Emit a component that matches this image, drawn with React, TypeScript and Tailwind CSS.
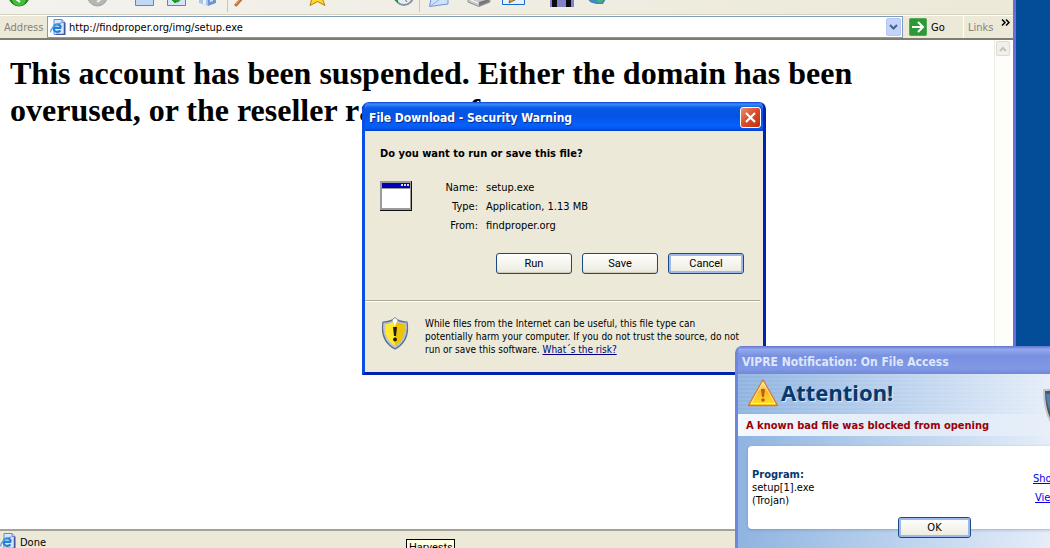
import React from "react";

const ui = "font-['DejaVu_Sans_Condensed','DejaVu_Sans',sans-serif]";
const sans = "font-[Roboto,'Liberation_Sans',sans-serif]";
const caption = "font-['DejaVu_Sans_Condensed','DejaVu_Sans',sans-serif]";

function PageIcon() {
  return (
    <svg width="16" height="16" viewBox="0 0 16 16" className="shrink-0" aria-hidden="true">
      <path d="M4 .5h8l3 3v12H4z" fill="#dce7ff" stroke="#6e86cf" />
      <path d="M12 .5v3h3" fill="#c3d2f5" stroke="#6e86cf" />
      <path d="M14.500 4v11.500H6" fill="none" stroke="#41569f" strokeWidth="1.500" />
      <path d="M11.200 8.800H4.200M11 8.400A3.800 3.800 0 1 0 10.400 11.300" fill="none" stroke="#1d7fd6" strokeWidth="2.200" />
      <path d="M1 13.500C-.5 10.500 6 3.600 11.500 4.200" fill="none" stroke="#4aa5ea" strokeWidth="1.200" />
    </svg>
  );
}

function Toolbar() {
  return (
    <div className="flex h-[15px] shrink-0 items-start overflow-hidden border-b border-[#d6d2bf] bg-gradient-to-r from-[#f3f2ee] to-[#ece9d8]" aria-hidden="true">
      <svg width="20" height="7" viewBox="0 0 20 7" className="ml-[9px] shrink-0">
        <circle cx="10" cy="-4" r="10" fill="#21941f" stroke="#127410" />
        <path d="M3-1h14a7 7 0 0 1-14 0" fill="#45bd3b" />
        <path d="M7-1l4 3" stroke="#fff" strokeWidth="2" />
      </svg>
      <svg width="21" height="7" viewBox="0 0 21 7" className="ml-[58px] shrink-0">
        <circle cx="10.500" cy="-4" r="10" fill="#b5b5b5" stroke="#a2a2a2" />
        <path d="M10 2l4-3" stroke="#eee" strokeWidth="2" />
      </svg>
      <svg width="20" height="7" viewBox="0 0 20 7" className="ml-[27px] shrink-0">
        <path d="M.5-1v6.500h18V-1" fill="#c3d7f8" stroke="#6580c7" />
      </svg>
      <svg width="20" height="7" viewBox="0 0 20 7" className="ml-[12px] shrink-0">
        <path d="M.5-1v6.500h18V-1" fill="#d6e4fb" stroke="#6580c7" />
        <path d="M5 0h6l-3 3zM9 2c3 0 4-1 4-3" fill="#1d9c20" stroke="#1d9c20" />
      </svg>
      <svg width="23" height="7" viewBox="0 0 23 7" className="ml-[10px] shrink-0">
        <path d="M2-1v4l9 3V-1z" fill="#a9c4ef" />
        <path d="M11-1v7l8-3v-4z" fill="#6f96d4" />
        <path d="M6-1v5l3 1V-1z" fill="#eaf2ff" />
        <path d="M13-1v3l3-1v-2z" fill="#d5e5ff" />
      </svg>
      <span className="ml-[7px] h-3 w-px shrink-0 bg-[#cbc7b5]" />
      <svg width="16" height="7" viewBox="0 0 16 7" className="ml-[6px] shrink-0">
        <path d="M2 5l8-9" stroke="#c86b32" strokeWidth="3" strokeLinecap="round" />
        <path d="M2 4l6-7" stroke="#f4ac72" />
      </svg>
      <svg width="20" height="7" viewBox="0 0 20 7" className="ml-[58px] shrink-0">
        <path d="M4-2L2 5.500l7.500-4 7.500 4L14-2z" fill="#ffd928" stroke="#bd7a0b" />
      </svg>
      <svg width="22" height="7" viewBox="0 0 22 7" className="ml-[64px] shrink-0">
        <circle cx="12" cy="-4" r="9" fill="#e3eef8" stroke="#8592a6" strokeWidth="2" />
        <path d="M12-2l3 4" stroke="#d33" />
        <path d="M1-1l5-1v5z" fill="#23a023" />
      </svg>
      <span className="ml-[5px] h-3 w-px shrink-0 bg-[#cbc7b5]" />
      <svg width="21" height="7" viewBox="0 0 21 7" className="ml-[9px] shrink-0">
        <path d="M2-1L.5 6.500 19 4V-1z" fill="#cfe2fb" stroke="#7293cf" />
        <path d="M1 6l9-6" stroke="#8fb0e6" />
      </svg>
      <svg width="24" height="7" viewBox="0 0 24 7" className="ml-[17px] shrink-0">
        <path d="M1-1v3l11 4.500L23 2v-3z" fill="#c9c9c9" stroke="#8e8e8e" />
        <path d="M12 2l10-3v3L12 6z" fill="#777" />
        <path d="M4 0l7 3" stroke="#fff" />
      </svg>
      <svg width="24" height="7" viewBox="0 0 24 7" className="ml-[11px] shrink-0">
        <path d="M.5-1v5.500h22V-1" fill="#e6f1ff" stroke="#1a6bd0" />
        <path d="M7 3l1-4 5 1z" fill="#e3a428" stroke="#333" strokeWidth=".6" />
      </svg>
      <svg width="24" height="7" viewBox="0 0 24 7" className="ml-[24px] shrink-0">
        <path d="M0 0h24v7H0z" fill="#8581c6" />
        <path d="M2 0h5v7H2zM16 0h5v7h-5z" fill="#0a0a12" />
      </svg>
      <svg width="20" height="7" viewBox="0 0 20 7" className="ml-[13px] shrink-0">
        <path d="M1-1c2 5 7 4 8 5h7l3-5z" fill="#3b8bc0" />
        <path d="M9-1c0 3 3 4 6 3l2-3z" fill="#4fae72" />
      </svg>
    </div>
  );
}

function AddressBar() {
  return (
    <form className={`${ui} flex h-[25px] shrink-0 items-center border-t border-b-2 border-t-white border-b-[#7f7c70] bg-[#ece9d8] text-[11px]`} onSubmit={(e) => e.preventDefault()}>
      <label htmlFor="address" className="w-[47px] shrink-0 pt-[2px] pl-1 text-[#85837b]">Address</label>
      <div className="flex h-[22px] min-w-0 flex-1 items-center border border-[#7f9db9] bg-white pl-[2px]">
        <PageIcon />
        <input id="address" defaultValue="http://findproper.org/img/setup.exe" className="min-w-0 flex-1 bg-transparent pt-[2px] pl-[3px] text-black outline-none" />
        <button type="button" aria-label="Show address list" className="mr-px flex h-[18px] w-[15px] items-center justify-center rounded-[2px] border border-[#b5c8f5] bg-[#c3d3fb]">
          <svg width="9" height="6" viewBox="0 0 9 6"><path d="M1 1l3.500 3.500L8 1" fill="none" stroke="#4d6185" strokeWidth="2" /></svg>
        </button>
      </div>
      <button type="submit" className="ml-[6px] flex w-[54px] shrink-0 items-center gap-1 text-black">
        <svg width="18" height="18" viewBox="0 0 18 18">
          <rect x=".5" y=".5" width="17" height="17" rx="1" fill="#2c9a34" stroke="#56a95a" />
          <path d="M3 9h11M9 4l5 5-5 5" fill="none" stroke="#fff" strokeWidth="2" />
        </svg>
        <span className="pt-[2px]">Go</span>
      </button>
      <div className="flex h-full w-[50px] shrink-0 justify-between border-l border-white pl-1 text-[#85837b]">
        <span className="self-center pt-[2px]">Links</span>
        <svg width="9" height="7" viewBox="0 0 9 7" className="mt-[3px] mr-[3px]"><path d="M1 .5l3 3-3 3M5 .5l3 3-3 3" fill="none" stroke="#000" strokeWidth="1.500" /></svg>
      </div>
    </form>
  );
}

function BrowserWindow() {
  return (
    <main className="mr-[34px] flex h-full flex-col border-r-[3px] border-[#6d6bdc] bg-[#ece9d8]">
      <Toolbar />
      <AddressBar />
      <div className="flex min-h-0 flex-1 bg-white">
        <h1 className="flex-1 pt-[15px] pl-[10px] font-['Liberation_Serif','Times_New_Roman',serif] text-[32px] leading-[37px] font-bold text-black">
          This account has been suspended. Either the domain has been
          <br />
          overused, or the reseller ran out of.
        </h1>
        <div className="mr-[2px] w-[17px] shrink-0 border-l border-[#eeede5] bg-[#fdfdfa] pt-px pl-px">
          <button aria-label="Scroll up" disabled className="flex h-[15px] w-[14px] items-center justify-center rounded-[2px] border border-[#dddbcf] bg-[#f1f0ea]">
            <svg width="8" height="6" viewBox="0 0 8 6"><path d="M1 5l3-3 3 3" fill="none" stroke="#c5c4b8" strokeWidth="2" /></svg>
          </button>
        </div>
      </div>
      <footer className={`${ui} flex h-[19px] shrink-0 items-start gap-1 border-t-2 border-[#a5a395] pt-[2px] text-[11px] leading-[20px] text-black`}>
        <PageIcon />
        <span>Done</span>
      </footer>
    </main>
  );
}

function DialogButton({ children, focused = false, className = "" }: { children: React.ReactNode; focused?: boolean; className?: string }) {
  return (
    <button
      type="button"
      className={`h-[21px] rounded-[3px] border border-[#1c4a7d] bg-gradient-to-b from-white to-[#eceade] text-[11px] leading-[19px] text-black ${focused ? "shadow-[inset_0_0_0_2px_#9db8ee]" : "shadow-[inset_0_-1px_1px_#cfcabb]"} ${className}`}
    >
      {children}
    </button>
  );
}

function ShieldIcon() {
  return (
    <svg width="28" height="33" viewBox="0 0 28 33" aria-hidden="true">
      <path d="M14 1c3 3 7 4 12 4 2 12-1 21-12 27C3 26 0 17 2 5c5 0 9-1 12-4z" fill="#b9c3d6" stroke="#5d6d8c" strokeWidth="1.200" />
      <path d="M14 4c3 2 6 3 9.500 3.300C25 17 22 24 14 29z" fill="#eec300" />
      <path d="M14 4c-3 2-6 3-9.500 3.300C3 17 6 24 14 29z" fill="#ffe92e" />
      <path d="M11.500 3L14 1l2.500 2L14 9z" fill="#fff" />
      <path d="M12 10h4l-1 9h-2z" fill="#1f1d12" />
      <circle cx="14" cy="22.500" r="2" fill="#1f1d12" />
    </svg>
  );
}

function FileDownloadDialog() {
  const details = [
    ["Name:", "setup.exe"],
    ["Type:", "Application, 1.13 MB"],
    ["From:", "findproper.org"],
  ];
  return (
    <section role="dialog" aria-labelledby="download-title" className="absolute top-[102px] left-[362px] w-[404px] overflow-hidden rounded-t-[7px] border-x-[3px] border-b-[3px] border-l-[#0a50e4] border-r-[#0222b4] border-b-[#0222b4] bg-[#ece9d8] text-black">
      <header className="flex h-[29px] items-center justify-between bg-[linear-gradient(#0a3fcf_0%,#3a8cf8_7%,#0a5ae8_20%,#0453e2_45%,#0560fb_80%,#0556ee_92%,#0340c4_100%)] pr-[2px] pl-1">
        <h2 id="download-title" className={`${caption} pt-[3px] text-[12px] font-bold text-white [text-shadow:1px_1px_#0b2f8f]`}>File Download - Security Warning</h2>
        <button aria-label="Close" className="mt-[2px] flex size-[21px] items-center justify-center rounded-[3px] border border-white bg-[linear-gradient(135deg,#eb8f74,#db4a23_50%,#bb3311)]">
          <svg width="13" height="13" viewBox="0 0 13 13"><path d="M2 2l9 9M11 2l-9 9" stroke="#fff" strokeWidth="2.200" /></svg>
        </button>
      </header>
      <div className="px-[15px] pt-[15px]">
        <p className={`${ui} text-[11px] leading-[16px] font-bold`}>Do you want to run or save this file?</p>
        <div className="flex pt-[16px]">
          <svg width="32" height="30" viewBox="0 0 32 30" className="mt-[3px] shrink-0" aria-hidden="true">
            <path d="M0 0h32v30H0z" fill="#111" />
            <path d="M0 0h31v29H0z" fill="#9b9b9b" />
            <path d="M2 2h28v5H2z" fill="#0000b8" />
            <path d="M2 8h28v19H2z" fill="#fff" />
            <path d="M21 3h2v2h-2zM24 3h2v2h-2zM27 3h2v2h-2z" fill="#ddd" />
          </svg>
          <dl className={`${ui} grid flex-1 grid-cols-[66px_1fr] gap-x-2 text-[11px] leading-[19px]`}>
            {details.map(([name, value]) => (
              <React.Fragment key={name}>
                <dt className="text-right">{name}</dt>
                <dd>{value}</dd>
              </React.Fragment>
            ))}
          </dl>
        </div>
        <div className={`${sans} flex justify-end gap-[10px] pt-[18px] pr-[4px]`}>
          <DialogButton className="w-[76px]">Run</DialogButton>
          <DialogButton className="w-[76px]">Save</DialogButton>
          <DialogButton className="w-[76px]" focused>Cancel</DialogButton>
        </div>
      </div>
      <div className="mt-[26px] mr-[3px] flex items-start border-t border-[#aca899] pt-[16px] pb-[16px] pl-[16px] shadow-[inset_0_1px_#fff]">
        <ShieldIcon />
        <p className={`${ui} pl-[16px] text-[10px] leading-[13px]`}>
          While files from the Internet can be useful, this file type can
          <br />
          potentially harm your computer. If you do not trust the source, do not
          <br />
          run or save this software. <a href="#risk" className="text-[#00007f] underline">What´s the risk?</a>
        </p>
      </div>
    </section>
  );
}

function WarningIcon() {
  return (
    <svg width="32" height="30" viewBox="0 0 32 30" aria-hidden="true">
      <defs>
        <linearGradient id="warning-fill" x1="0" y1="0" x2="0" y2="1">
          <stop offset="0" stopColor="#fff0a8" />
          <stop offset=".45" stopColor="#fbb72c" />
          <stop offset="1" stopColor="#ffe21f" />
        </linearGradient>
      </defs>
      <path d="M16 2L1.500 27.500h29z" fill="url(#warning-fill)" stroke="#d9792a" strokeWidth="1.500" strokeLinejoin="round" />
      <path d="M16 4L4 25.500h24z" fill="none" stroke="#fff2b8" strokeWidth=".8" />
      <path d="M14 11h4l-1 8h-2z" fill="#b8600f" />
      <circle cx="16" cy="22" r="1.800" fill="#b8600f" />
    </svg>
  );
}

function NotificationDialog() {
  return (
    <section role="dialog" aria-labelledby="notice-title" className="absolute top-[346px] left-[735px] h-[230px] w-[360px] overflow-hidden rounded-t-[7px] border-l-[3px] border-[#6f86dc] bg-gradient-to-r from-[#8fb4e0] to-[#f2f6fc] text-black">
      <header className="h-[28px] bg-[linear-gradient(#5f74ce_0%,#93a9ee_12%,#7890e0_35%,#8099e6_80%,#7388d8_100%)] pl-[4px]">
        <h2 id="notice-title" className={`${caption} text-[12px] leading-[32px] font-bold text-[#dfe7fb]`}>VIPRE Notification: On File Access</h2>
      </header>
      <div className="relative flex h-[40px] items-start gap-[2px] bg-[repeating-linear-gradient(#ffffff14_0_2px,transparent_2px_4px)] pt-[4px] pl-[9px]">
        <WarningIcon />
        <strong className="font-['Noto_Sans','Open_Sans',sans-serif] text-[22px] leading-[28px] font-bold text-[#07386e] [text-shadow:1px_1px_#dcebfa]">Attention!</strong>
        <svg width="40" height="48" viewBox="0 0 40 48" className="absolute top-[14px] left-[305px]" aria-hidden="true">
          <path d="M1 2c8 0 14-1 19-2 5 1 11 2 19 2 0 22-6 36-19 44C8 39 1 24 1 2z" fill="#50545c" stroke="#c4c8ce" strokeWidth="2" />
          <path d="M3 6c6 0 11-1 15-2v32C9 30 4 20 3 6z" fill="#4e83b9" />
        </svg>
      </div>
      <p className={`${ui} h-[22px] bg-gradient-to-r from-[#f5f9fe] to-[#e6eef8]/40 pl-[8px] text-[11px] leading-[24px] font-bold text-[#9a0008]`}>A known bad file was blocked from opening</p>
      <div className={`${ui} mt-[10px] ml-[10px] flex h-[83px] justify-between rounded-[4px] bg-white pt-[22px] pr-[14px] pl-[4px] text-[11px] leading-[13px] shadow-[0_1px_3px_#5c7ba880]`}>
        <div>
          <h3 className="font-bold text-[#07386e]">Program:</h3>
          <p>setup[1].exe</p>
          <p>(Trojan)</p>
        </div>
        <div className="flex w-[48px] flex-col gap-[6px] pt-[4px] whitespace-nowrap text-[#0000ee] underline">
          <a href="#details">Show</a>
          <a href="#log" className="pl-[2px]">View</a>
        </div>
      </div>
      <div className={`${ui} relative -mt-[12px] flex pl-[160px]`}>
        <DialogButton className="w-[73px]" focused>OK</DialogButton>
      </div>
    </section>
  );
}

export default function App() {
  return (
    <div className="relative h-screen overflow-hidden bg-[#024c98]">
      <BrowserWindow />
      <FileDownloadDialog />
      <NotificationDialog />
      <div role="tooltip" className={`${sans} absolute top-[539px] left-[406px] w-[49px] border border-black bg-[#ffffe1] px-[2px] text-[11px] leading-[15px] text-black`}>Harvests</div>
    </div>
  );
}
